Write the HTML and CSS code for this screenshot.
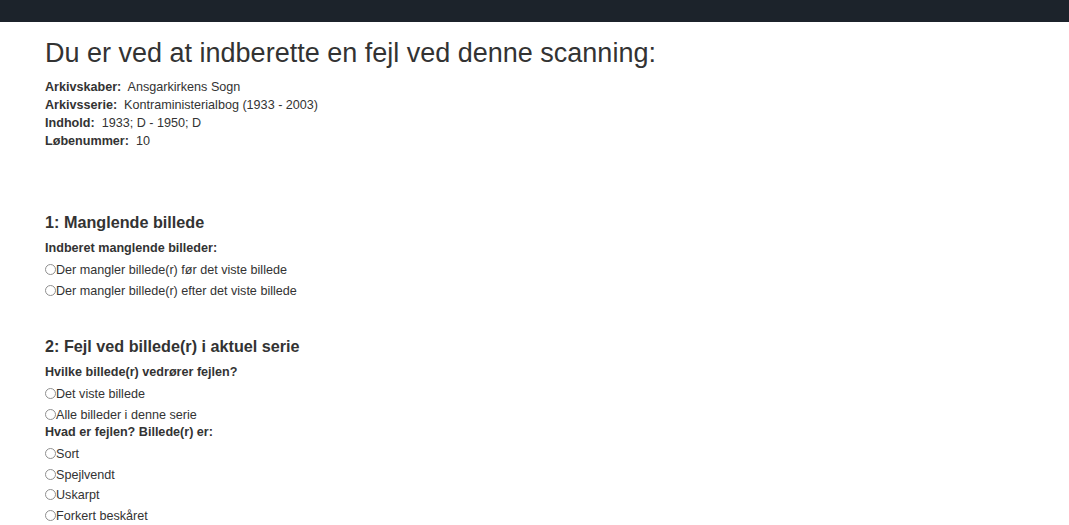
FILE: index.html
```html
<!DOCTYPE html>
<html lang="da">
<head>
    <meta charset="UTF-8">
    <meta name="viewport" content="width=device-width, initial-scale=1.0">
    <title>Indberet fejl</title>
    <link rel="stylesheet" href="styles.css">
</head>
<body>

    <nav class="topbar"></nav>

    <main class="page">
        <h1>Du er ved at indberette en fejl ved denne scanning:</h1>

        <!-- Info about the current scanning -->
        <div class="meta">
            <div><b>Arkivskaber:</b>&nbsp; Ansgarkirkens Sogn</div>
            <div><b>Arkivsserie:</b>&nbsp; Kontraministerialbog (1933 - 2003)</div>
            <div><b>Indhold:</b>&nbsp; 1933; D - 1950; D</div>
            <div><b>Løbenummer:</b>&nbsp; 10</div>
        </div>

        <!-- Section 1 -->
        <section class="report first">
            <h3>1: Manglende billede</h3>
            <p class="question">Indberet manglende billeder:</p>
            <div class="options">
                <label class="option"><input type="radio" name="missing">Der mangler billede(r) før det viste billede</label>
                <label class="option"><input type="radio" name="missing">Der mangler billede(r) efter det viste billede</label>
            </div>
        </section>

        <!-- Section 2 -->
        <section class="report">
            <h3>2: Fejl ved billede(r) i aktuel serie</h3>
            <p class="question">Hvilke billede(r) vedrører fejlen?</p>
            <div class="options">
                <label class="option"><input type="radio" name="scope">Det viste billede</label>
                <label class="option"><input type="radio" name="scope">Alle billeder i denne serie</label>
            </div>
            <p class="question after">Hvad er fejlen? Billede(r) er:</p>
            <div class="options">
                <label class="option"><input type="radio" name="error">Sort</label>
                <label class="option"><input type="radio" name="error">Spejlvendt</label>
                <label class="option"><input type="radio" name="error">Uskarpt</label>
                <label class="option"><input type="radio" name="error">Forkert beskåret</label>
            </div>
        </section>
    </main>

</body>
</html>
```

FILE: styles.css
```css
/* Base styling */
body {
    font-family: "Liberation Sans", Arial, sans-serif;
    font-size: 12.6px;
    line-height: 18px;
    margin: 0;
    padding: 0;
    color: #333;
    background-color: #fff;
}

.topbar {
    height: 22px;
    background-color: #1c232b;
}

.page {
    padding-left: 45px;
}

h1 {
    font-size: 27px;
    font-weight: normal;
    line-height: 30px;
    margin: 16px 0 10px;
}

.meta b {
    font-weight: bold;
}

/* Report sections */
.report {
    margin-top: 36px;
}

.report.first {
    margin-top: 63px;
}

.report h3 {
    font-size: 16.2px;
    font-weight: bold;
    line-height: 18px;
    margin: 0 0 8px;
}

.question {
    font-weight: bold;
    margin: 0;
}

.question.after {
    margin-top: -3px;
}

.options {
    margin-top: 3px;
}

.option {
    display: block;
    line-height: 20.7px;
}

.option input {
    -webkit-appearance: none;
    appearance: none;
    width: 11px;
    height: 11px;
    margin: 0 0 -1px 0;
    border: 1px solid #8f8f8f;
    border-radius: 50%;
    background-color: #fff;
    vertical-align: baseline;
}

.option input:checked {
    background: radial-gradient(circle, #333 0 3px, #fff 3.5px);
}
```
